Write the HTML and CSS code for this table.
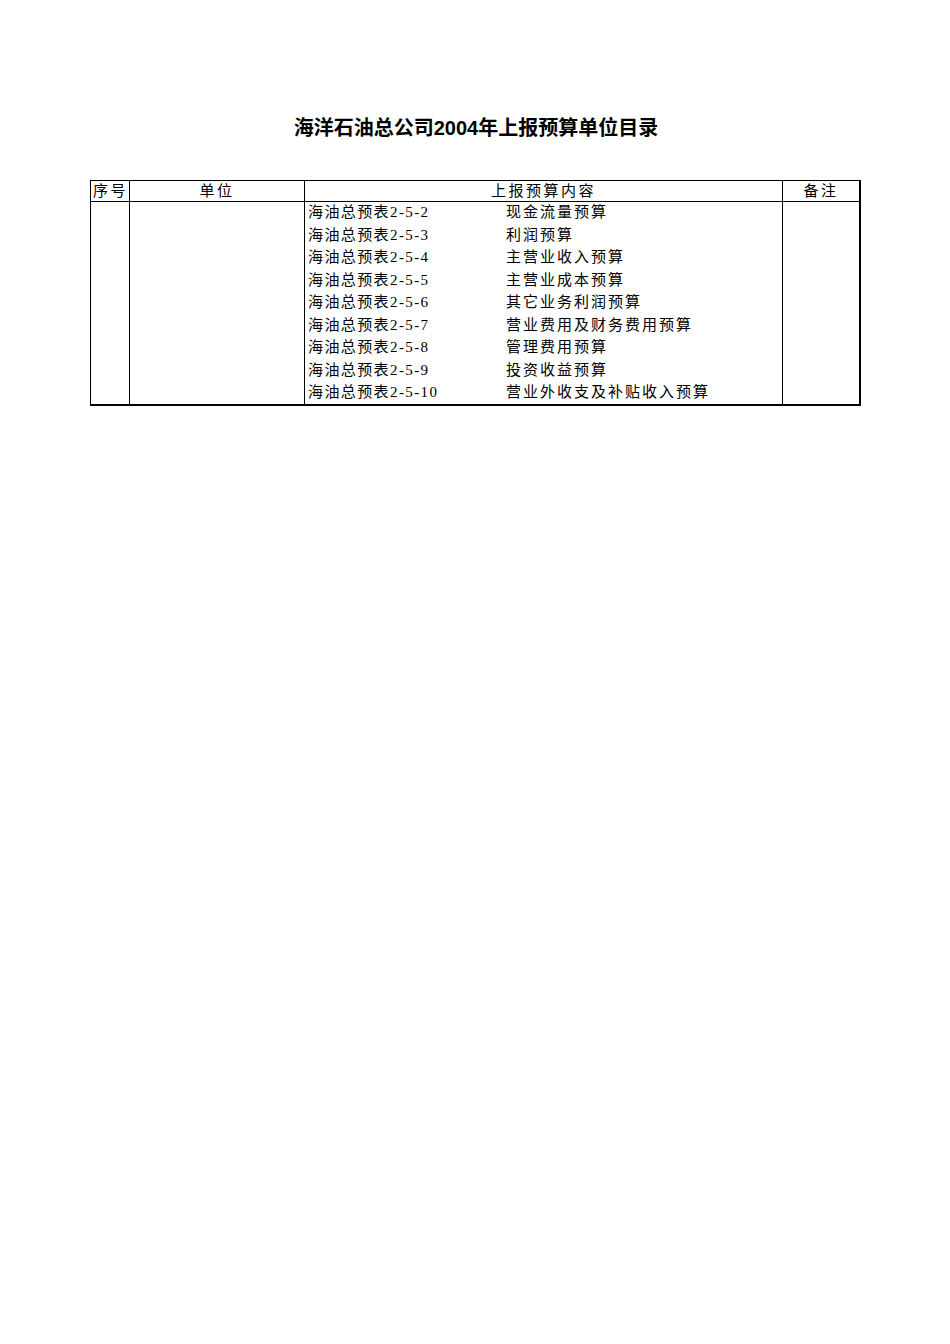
FILE: index.html
```html
<!DOCTYPE html>
<html lang="zh-CN">
<head>
<meta charset="utf-8">
<title>海洋石油总公司2004年上报预算单位目录</title>
<link rel="stylesheet" href="styles.css">
</head>
<body>
<div class="page">
  <h1 class="title">海洋石油总公司2004年上报预算单位目录</h1>
  <table class="sheet">
    <colgroup>
      <col class="c-no">
      <col class="c-unit">
      <col class="c-content">
      <col class="c-note">
    </colgroup>
    <thead>
      <tr>
        <th class="h-no">序号</th>
        <th class="h-center">单位</th>
        <th class="h-center">上报预算内容</th>
        <th class="h-center last">备注</th>
      </tr>
    </thead>
    <tbody>
      <tr>
        <td></td>
        <td></td>
        <td class="content">
          <div class="list">
            <span class="code">海油总预表2-5-2</span><span class="name">现金流量预算</span>
            <span class="code">海油总预表2-5-3</span><span class="name">利润预算</span>
            <span class="code">海油总预表2-5-4</span><span class="name">主营业收入预算</span>
            <span class="code">海油总预表2-5-5</span><span class="name">主营业成本预算</span>
            <span class="code">海油总预表2-5-6</span><span class="name">其它业务利润预算</span>
            <span class="code">海油总预表2-5-7</span><span class="name">营业费用及财务费用预算</span>
            <span class="code">海油总预表2-5-8</span><span class="name">管理费用预算</span>
            <span class="code">海油总预表2-5-9</span><span class="name">投资收益预算</span>
            <span class="code">海油总预表2-5-10</span><span class="name">营业外收支及补贴收入预算</span>
          </div>
        </td>
        <td class="last"></td>
      </tr>
    </tbody>
  </table>
</div>
</body>
</html>
```

FILE: styles.css
```css
html, body {
  margin: 0;
  padding: 0;
  background: #ffffff;
}

body {
  font-family: "Liberation Sans", "Noto Sans CJK SC", sans-serif;
  color: #000000;
}

.page {
  width: 950px;
  padding-top: 116px;
}

.title {
  margin: 0;
  font-size: 20px;
  line-height: 24px;
  font-weight: 700;
  text-align: center;
  padding-left: 2px;
}

.sheet {
  margin: 40px 0 0 90px;
  width: 770px;
  table-layout: fixed;
  border-collapse: separate;
  border-spacing: 0;
  border-top: 1px solid #000;
  border-left: 1px solid #000;
  font-size: 15px;
}

.c-no { width: 39px; }
.c-unit { width: 175px; }
.c-content { width: 478px; }
.c-note { width: 78px; }

.sheet th,
.sheet td {
  border-right: 1px solid #000;
  border-bottom: 1px solid #000;
  padding: 0;
  vertical-align: top;
}

.sheet th {
  font-weight: 400;
  height: 20px;
  line-height: 20px;
  letter-spacing: 2.5px;
  white-space: nowrap;
}

.h-no {
  text-align: left;
  padding-left: 2px !important;
}

.h-center {
  text-align: center;
}

.sheet tbody td {
  border-bottom: 2px solid #000;
  height: 200px;
}

.sheet .last {
  border-right: 2px solid #000;
}

.content {
  padding-left: 3px !important;
}

.list {
  display: grid;
  grid-template-columns: 198px 1fr;
  line-height: 22.5px;
  margin-top: -1px;
  white-space: nowrap;
}

.code {
  font-family: "Liberation Serif", "Noto Sans CJK SC", serif;
  letter-spacing: 1.4px;
}

.name {
  letter-spacing: 2px;
}
```
